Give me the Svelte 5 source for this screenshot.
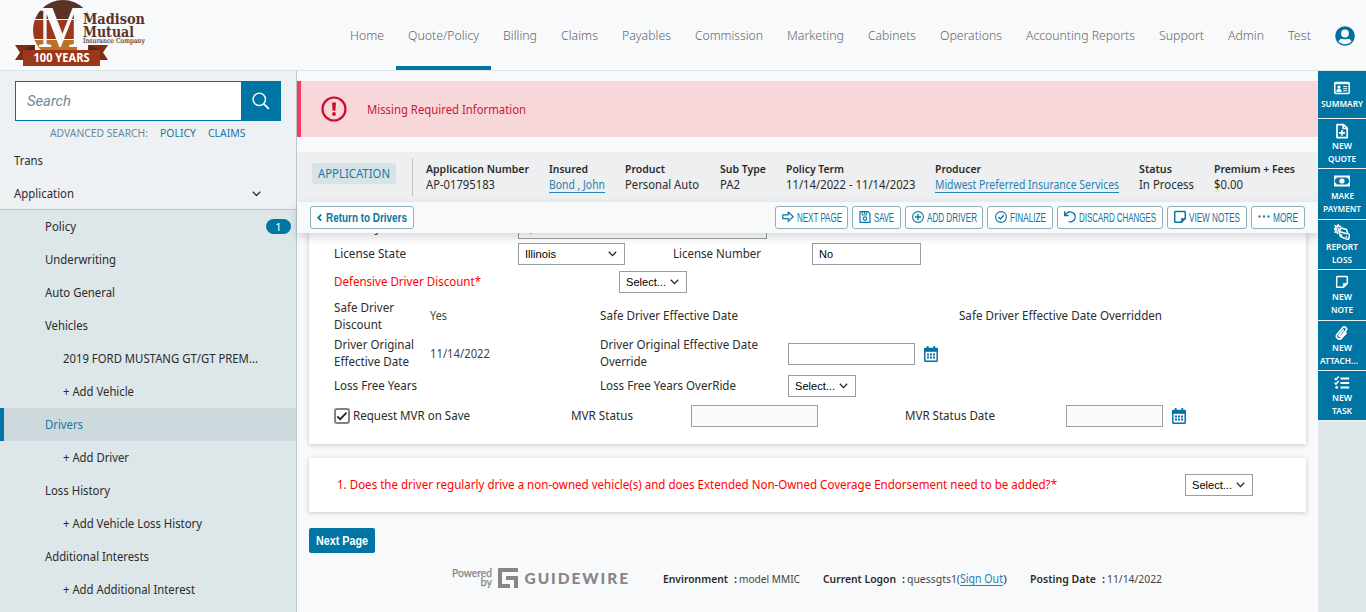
<script>
  const nav = [
    ['Home', 34], ['Quote/Policy', 71, true], ['Billing', 34], ['Claims', 37], ['Payables', 49],
    ['Commission', 68], ['Marketing', 57], ['Cabinets', 48], ['Operations', 62],
    ['Accounting Reports', 109], ['Support', 45], ['Admin', 36], ['Test', 23]
  ];
  const side = [
    ['Policy', 31, 1], ['Underwriting', 71, 1], ['Auto General', 70, 1], ['Vehicles', 43, 1],
    ['2019 FORD MUSTANG GT/GT PREM...', 195, 2], ['+ Add Vehicle', 71, 2], ['Drivers', 38, 1],
    ['+ Add Driver', 66, 2], ['Loss History', 65, 1], ['+ Add Vehicle Loss History', 139, 2],
    ['Additional Interests', 104, 1], ['+ Add Additional Interest', 132, 2]
  ];
  const info = [
    ['Application Number', 103, 'AP-01795183', 69], ['Insured', 39, 'Bond , John', 56, true],
    ['Product', 40, 'Personal Auto', 74], ['Sub Type', 46, 'PA2', 20],
    ['Policy Term', 58, '11/14/2022 - 11/14/2023', 129.5],
    ['Producer', 46, 'Midwest Preferred Insurance Services', 184, true],
    ['Status', 33, 'In Process', 55], ['Premium + Fees', 81, '$0.00', 29]
  ];
  const tools = [
    ['next', 'NEXT PAGE', 45, 73], ['save', 'SAVE', 20, 49], ['add', 'ADD DRIVER', 50, 78],
    ['check', 'FINALIZE', 36, 66], ['undo', 'DISCARD CHANGES', 77, 106],
    ['note', 'VIEW NOTES', 51, 80], ['dots', 'MORE', 25, 54]
  ];
  const rail = [
    ['card', [['SUMMARY', 42]], 48], ['file', [['NEW', 20], ['QUOTE', 28]], 50],
    ['cash', [['MAKE', 23], ['PAYMENT', 38]], 51], ['car', [['REPORT', 32], ['LOSS', 20]], 50],
    ['note', [['NEW', 20], ['NOTE', 22]], 51], ['clip', [['NEW', 20], ['ATTACH...', 38]], 50],
    ['tasks', [['NEW', 20], ['TASK', 20]], 50]
  ];
</script>

{#snippet T(s, w, cls = '')}
  <svg class="t {cls}" width={w} height="16"><text x="0" y="12" textLength={w} lengthAdjust="spacingAndGlyphs">{s}</text></svg>
{/snippet}

{#snippet select(s, w, tw)}
  <div class="field select" style="width:{w}px">
    {@render T(s, tw, 'ctl')}
    <svg width="9" height="6" viewBox="0 0 9 6"><path d="M.8.8 4.5 4.6 8.2.8" fill="none" stroke="#222" stroke-width="1.3" /></svg>
  </div>
{/snippet}

{#snippet calendar()}
  <svg class="cal" width="14" height="16" viewBox="0 0 14 16">
    <path d="M3.7 0v3M10.3 0v3" stroke="#0075a3" stroke-width="1.8" />
    <rect x=".8" y="2.4" width="12.4" height="12.8" rx=".4" fill="#fff" stroke="#0075a3" stroke-width="1.5" />
    <path d="M.1 4h13.800" stroke="#0075a3" stroke-width="3.6" />
    <path d="M3 8.5h8M3 11.500h8" stroke="#0075a3" stroke-width="1.8" stroke-dasharray="2 1" />
  </svg>
{/snippet}

{#snippet icon(n)}
  <svg class="ic" width="16" height="16" viewBox="0 0 16 16" fill="none" stroke="currentColor" stroke-width="1.4">
    {#if n === 'next'}
      <path d="M2.8 5.8h5.4V3l5 4.7-5 4.7V9.6H2.8z" stroke-width="1.2" stroke-linejoin="round" />
    {:else if n === 'save'}
      <path d="M3 2.7h8l2 2v8.6H3z" stroke-width="1.2" /><path d="M5.3 3v3h4.4V3M7.6 3v2" stroke-width="1" /><circle cx="8" cy="9.6" r="1.7" stroke-width="1.2" />
    {:else if n === 'add'}
      <circle cx="8" cy="8" r="5.4" stroke-width="1.1" /><path d="M8 5v6M5 8h6" />
    {:else if n === 'check'}
      <circle cx="8" cy="8" r="5.4" stroke-width="1.1" /><path d="m5.4 8 2 2 3.3-3.800" />
    {:else if n === 'undo'}
      <path d="M2.6 2.3v4.2h4.2M3 6.3C4.4 3.7 7 2.5 9.500 3.100c3 .8 4.500 3.800 3.500 6.500-.9 2.500-3.800 4-6.700 2.900" stroke-width="1.300" />
    {:else if n === 'note'}
      <path d="M2.700 3.300q0-.7.7-.7h9.200q.7 0 .7.7v6.200l-3.800 3.800H3.400q-.7 0-.7-.7z" stroke-width="1.500" /><path d="M9.300 13V9.400H13z" fill="currentColor" stroke-width=".6" />
    {:else if n === 'dots'}
      <path d="M2.500 7.500h2M7 7.500h2M11.500 7.500h2" stroke-width="1.900" />
    {:else if n === 'card'}
      <rect x=".8" y="2.500" width="14.400" height="11" rx="1" stroke-width="1.500" /><path d="M1 3.500h14" /><circle cx="5" cy="7.100" r="1.600" fill="currentColor" stroke="none" /><path d="M2.700 11.600q0-2.600 2.300-2.600t2.300 2.600zM9.200 6.600h4M9.200 8.700h4M9.200 10.800h4" fill="currentColor" stroke-width="1" />
    {:else if n === 'file'}
      <path d="M3 1.600h6.500l3.700 3.600v9.400H3z" stroke-width="1.700" stroke-linejoin="round" /><path d="M9.200 1.500v4h4M8 7v5.800M5 9.900h6" stroke-width="1.600" />
    {:else if n === 'cash'}
      <path fill="currentColor" stroke="none" fill-rule="evenodd" d="M-1 2.500h18v11H-1zM2.800 4.500q-.3 1.700-2 2v3q1.700.3 2 2h10.400q.3-1.700 2-2v-3q-1.700-.3-2-2z" /><circle cx="8" cy="8" r="2.600" fill="currentColor" stroke="none" />
    {:else if n === 'car'}
      <path d="m5 7.300 2.400-3.300 5.200 1.500 1 4 2.200 1.600-1.300 4.200-2.300-.4-5.700-2.400-.8-2.500z" stroke-width="1.500" stroke-linejoin="round" /><path d="m6 7.700 6.800 2M6.600 10.700l1.600.5M11.700 12.600l1.500.3" stroke-width="1.500" /><path d="M7.200 2.500 5.200 2.500 4.300.800 3.300 2.400 1.200 1.800l.6 2.100L0 5l1.800 1-.7 2.200 1.900-.3.700 2" stroke-width="1.400" fill="none" /><circle cx="3.800" cy="5" r="1.300" stroke-width="1.100" />
    {:else if n === 'clip'}
      <path d="m9.800 4.700-4.300 4.900c-1 1.300.6 2.700 1.700 1.500l4.700-5.300c2-2.500-1.200-5.200-3.400-2.800L3.300 9c-2.600 3.400 1.600 7 4.600 3.800l4.600-5.200" stroke-width="1.700" />
    {:else if n === 'tasks'}
      <path d="M6.500 3.600h8.700M6.500 8h8.700M6.500 12.500h8.700" stroke-width="2" /><path d="m.7 3.400 1.300 1.200 2.700-3M.7 7.900 2 9.100l2.700-3" stroke-width="1.500" /><circle cx="2.700" cy="12.500" r="1.400" fill="currentColor" stroke="none" />
    {/if}
  </svg>
{/snippet}

<div class="app">
  <header>
    <svg class="logo" width="135" height="70" viewBox="0 0 135 70">
      <defs><clipPath id="disc"><circle cx="48" cy="30" r="30" /></clipPath></defs>
      <g clip-path="url(#disc)">
        <rect x="10" y="-2" width="80" height="21" fill="#5b3325" />
        <rect x="10" y="20" width="52" height="19" fill="#9d371b" />
        <rect x="10" y="40" width="52" height="20" fill="#b97224" />
        <rect x="62" y="8.500" width="20" height="40" fill="#f7f9fb" />
      </g>
      <text x="23" y="47" textLength="50" lengthAdjust="spacingAndGlyphs" class="m">M</text>
      <path d="M0 45h20v15H0l5-7.500z M93 45H73v15h20l-5-7.500z" fill="#812a16" />
      <path d="M8 50 19 45.500V50zM85 50 74 45.500V50z" fill="#50251b" />
      <rect x="8" y="50" width="77" height="16" fill="#9d371b" />
      <text x="18.500" y="62" textLength="56" lengthAdjust="spacingAndGlyphs" class="yrs">100 YEARS</text>
      <text x="68" y="24" textLength="62" lengthAdjust="spacingAndGlyphs" class="mm">Madison</text>
      <text x="68" y="36.600" textLength="51" lengthAdjust="spacingAndGlyphs" class="mm">Mutual</text>
      <text x="68" y="43.300" textLength="62" lengthAdjust="spacingAndGlyphs" class="ins">Insurance Company</text>
    </svg>
    <nav>
      {#each nav as [s, w, on]}
        <a class:on style="width:{w + 24}px">{@render T(s, w, 'nav')}</a>
      {/each}
    </nav>
    <svg class="avatar" width="20" height="20" viewBox="0 0 20 20">
      <circle cx="10" cy="10" r="9.800" fill="#00709c" /><circle cx="10" cy="7.500" r="3.900" fill="#f7f9fb" />
      <path d="M3.500 15.500c.7-2.200 2.200-2.800 3.800-2.800q2.700 1 5.400 0c1.600 0 3.100.6 3.800 2.800-3.600 3.500-9.400 3.500-13 0z" fill="#f7f9fb" />
    </svg>
  </header>

  <div class="body">
    <aside>
      <div class="search">
        <div class="input">{@render T('Search', 44, 'ph')}</div>
        <div class="go"><svg width="18" height="18" viewBox="0 0 18 18" fill="none" stroke="#fff"><circle cx="7.300" cy="7.300" r="6.200" stroke-width="1.400" /><path d="m11.800 11.800 5 5" stroke-width="1.800" /></svg></div>
      </div>
      <div class="adv">
        {@render T('ADVANCED SEARCH:', 98, 's11 mute')}
        {@render T('POLICY', 36, 's11 link')}
        {@render T('CLAIMS', 37.5, 's11 link')}
      </div>
      <div class="item">{@render T('Trans', 29)}</div>
      <div class="item group">{@render T('Application', 60)}<svg width="9" height="6" viewBox="0 0 9 6"><path d="M.800.800 4.500 4.400 8.200.800" fill="none" stroke="#333" stroke-width="1.400" /></svg></div>
      <div class="tree">
        {#each side as [s, w, l]}
          <div class="item l{l}" class:sel={s === 'Drivers'}>
            {@render T(s, w, s === 'Drivers' ? 'link' : '')}
            {#if s === 'Policy'}<span class="badge">1</span>{/if}
          </div>
        {/each}
      </div>
    </aside>

    <main>
      <div class="alert">
        <svg width="26" height="26" viewBox="0 0 26 26"><circle cx="13" cy="13" r="11.500" fill="none" stroke="#cf0a2c" stroke-width="2.200" /><path d="M11 6.500h4l-.6 8.300h-2.800z" fill="#cf0a2c" /><circle cx="13" cy="18" r="1.900" fill="#cf0a2c" /></svg>
        {@render T('Missing Required Information', 159, 'err')}
      </div>
      <div class="info">
        <div class="tag">{@render T('APPLICATION', 72, 'link')}</div>
        <div class="rule"></div>
        <div class="cols">
          {#each info as [k, kw, v, vw, link]}
            <div>{@render T(k, kw, 'b')}<div class:ul={link} style="width:{vw}px">{@render T(v, vw, link ? 'lk' : '')}</div></div>
          {/each}
        </div>
      </div>
      <div class="bar">
        <button class="ret"><svg width="5" height="8" viewBox="0 0 5 8"><path d="M4.200.700 1.200 3.700l3 3" fill="none" stroke="#0075a3" stroke-width="1.700" /></svg>{@render T('Return to Drivers', 81, 'b blue big')}</button>
        <div class="tools">
          {#each tools as [i, s, w, bw]}
            <button style="width:{bw}px">{@render icon(i)}{@render T(s, w, 'blue tool')}</button>
          {/each}
        </div>
      </div>
      <div class="scroll">
        <section class="form">
          <div class="row r0">{@render T('Country', 47)}<div class="field" style="width:249px">{@render T(',', 3, 'blue comma')}</div></div>
          <div class="row r1">{@render T('License State', 72)}{@render select('Illinois', 107, 31)}{@render T('License Number', 88)}<div class="field" style="width:109px">{@render T('No', 14, 'ctl')}</div></div>
          <div class="row r2">{@render T('Defensive Driver Discount*', 147, 'red')}{@render select('Select...', 68, 40)}</div>
          <div class="row r3"><div>{@render T('Safe Driver', 60)}{@render T('Discount', 48)}</div>{@render T('Yes', 17, 'val')}{@render T('Safe Driver Effective Date', 138)}{@render T('Safe Driver Effective Date Overridden', 203)}</div>
          <div class="row r4"><div>{@render T('Driver Original', 80)}{@render T('Effective Date', 75)}</div>{@render T('11/14/2022', 60, 'val')}<div>{@render T('Driver Original Effective Date', 158)}{@render T('Override', 47)}</div><div class="field" style="width:127px"></div>{@render calendar()}</div>
          <div class="row r5">{@render T('Loss Free Years', 83)}{@render T('Loss Free Years OverRide', 136)}{@render select('Select...', 68, 40)}</div>
          <div class="row r6">
            <div class="chk"><svg width="16" height="16" viewBox="0 0 16 16"><rect x="1" y="1" width="14" height="14" rx="2" fill="#fff" stroke="#7b8586" stroke-width="2" /><path d="m3.300 8.300 2.900 2.900 6.300-6.600" fill="none" stroke="#222" stroke-width="1.700" /></svg>{@render T('Request MVR on Save', 117)}</div>
            {@render T('MVR Status', 62)}<div class="field off" style="width:127px"></div>{@render T('MVR Status Date', 90)}<div class="field off" style="width:97px"></div>{@render calendar()}
          </div>
        </section>
        <section class="question">
          {@render T('1. Does the driver regularly drive a non-owned vehicle(s) and does Extended Non-Owned Coverage Endorsement need to be added?*', 720, 'red')}
          {@render select('Select...', 68, 40)}
        </section>
        <button class="primary">{@render T('Next Page', 52, 'white')}</button>
        <footer>
          <svg class="gw" width="178" height="24" viewBox="0 0 178 24" fill="#868686">
            <text x="0" y="10.500" textLength="40" lengthAdjust="spacingAndGlyphs" class="pw">Powered</text><text x="28.500" y="20" textLength="11.500" lengthAdjust="spacingAndGlyphs" class="pw">by</text>
            <path d="M46 2h20v4H50v12h8v-4h-4v-4h12v12h-4v-8h-4v8H46z" />
            <text x="72.500" y="18" textLength="105.500" lengthAdjust="spacingAndGlyphs" class="gwt">GUIDEWIRE</text>
          </svg>
          <div class="f">{@render T('Environment', 65, 's11 b')}{@render T(':', 3, 's11 b')}{@render T('model MMIC', 61, 's11 val')}</div>
          <div class="f">{@render T('Current Logon', 73, 's11 b')}{@render T(':', 3, 's11 b')}<div class="sign">{@render T('quessgts1(', 53, 's11 val')}<div class="ul">{@render T('Sign Out', 43, 's11 lk')}</div>{@render T(')', 4, 's11 val')}</div></div>
          <div class="f">{@render T('Posting Date', 66, 's11 b')}{@render T(':', 3, 's11 b')}{@render T('11/14/2022', 55, 's11 val')}</div>
        </footer>
      </div>
    </main>

    <div class="rail">
      {#each rail as [i, lines, h]}
        <div class="ri {i}" class:one={lines.length === 1} style="height:{h}px">
          {@render icon(i)}
          {#each lines as [s, w]}{@render T(s, w, 'rt')}{/each}
        </div>
      {/each}
    </div>
  </div>
</div>

<style>
  :global(body) { background: #f7f9fb; overflow: hidden; }
  .app { width: 1366px; height: 612px; display: flex; flex-direction: column; overflow: hidden; font-family: "Noto Sans", sans-serif; background: #f7f9fb; }
  svg { display: block; flex: none; }
  .t { overflow: visible; fill: #2b2b2b; font-size: 12.300px; }
  .t.nav { fill: #686868; font-size: 13px; font-weight: 300; height: 18px; }
  .t.s11 { font-size: 11.500px; }
  .t.mute { fill: #6b8a99; }
  .t.link { fill: #1c77a2; }
  .t.lk { fill: #2a82b2; font-size: 12px; }
  .t.blue { fill: #0b74a1; }
  .t.red { fill: #f00; }
  .t.err { fill: #c9183c; }
  .t.val { fill: #444; }
  .t.b { font-weight: 600; font-size: 11.500px; }
  .t.big { font-size: 12.500px; }
  .t.tool { font-size: 12.300px; }
  .t.ctl { font-family: "Liberation Sans", sans-serif; font-size: 11.500px; fill: #000; }
  .t.ph { font-family: Roboto, sans-serif; font-style: italic; font-size: 14.500px; fill: #6b8a99; padding-top: 2px; }
  .t.white { fill: #fff; font-weight: 700; font-size: 12px; }
  .t.rt { fill: #fff; font-weight: 600; font-size: 9.700px; height: 13px; }
  header { height: 70px; flex: none; display: flex; border-bottom: 1px solid #dbe5e8; padding-left: 15px; }
  .logo { overflow: hidden; }
  .m { font: bold 59px "Liberation Serif", serif; fill: #f7f9fb; }
  .yrs { font: bold 11.500px "Noto Sans", sans-serif; fill: #fff; }
  .mm { font: bold 15px "DejaVu Serif", serif; fill: #5b3325; }
  .ins { font: 6.800px "DejaVu Serif", serif; fill: #5b3325; stroke: #5b3325; stroke-width: .15; }
  nav { display: flex; margin-left: 188px; }
  nav a { display: flex; justify-content: center; height: 70px; box-sizing: border-box; padding-top: 28px; }
  nav a.on { border-bottom: 4px solid #0075a3; }
  .avatar { margin: 26px 0 0 12px; }
  .body { flex: 1; display: flex; min-height: 0; }
  aside { width: 296px; flex: none; border-right: 1px solid #b5c9ce; background: #edf1f4; overflow: hidden; }
  .search { display: flex; margin: 10px 15px 0; height: 40px; }
  .input { flex: 1; border: 1px solid #0075a3; border-right: 0; background: #fff; display: flex; align-items: center; padding-left: 11px; }
  .go { width: 40px; background: #0075a3; display: flex; align-items: center; justify-content: center; }
  .adv { display: flex; gap: 12px; padding: 4px 0 0 50px; height: 19px; }
  .item { height: 33px; display: flex; align-items: center; box-sizing: border-box; padding-left: 14px; }
  .group { justify-content: space-between; padding-right: 35px; padding-top: 1px; border-bottom: 1px solid #b5c9ce; }
  .tree { background: #dde6e9; padding-bottom: 20px; }
  .l1 { padding-left: 45px; }
  .l2 { padding-left: 63px; }
  .sel { background: #cdd9dd; border-left: 4px solid #0075a3; padding-left: 41px; }
  .badge { margin-left: auto; margin-right: 5px; width: 25px; height: 15px; border-radius: 8px; background: #0075a3; color: #fff; font-size: 11px; line-height: 15px; text-align: center; }
  main { width: 1021px; flex: none; display: flex; flex-direction: column; }
  .alert { margin-top: 10px; height: 56px; background: #f8d7da; border-left: 4px solid #f93b5f; display: flex; align-items: center; gap: 20px; padding-left: 20px; flex: none; }
  .alert .t { height: 15px; }
  .info { margin-top: 15px; height: 50px; background: #eeeff1; display: flex; align-items: center; flex: none; }
  .tag { width: 84px; height: 21px; margin: -7px 0 0 15px; border-radius: 3px; background: #d6e4e7; display: flex; align-items: center; justify-content: center; }
  .rule { width: 1px; height: 38px; background: #c0c4c6; margin: 0 13px 0 16px; }
  .cols { display: grid; grid-template-columns: 123px 76px 94.500px 66px 149.500px 203.500px 75px 90px; margin-top: -1px; }
  .ul { height: 15px; border-bottom: 1px solid #2a82b2; }
  .bar { height: 31px; flex: none; display: flex; justify-content: space-between; align-items: flex-start; padding: 4px 13px 0; position: relative; z-index: 1; background: #f7f9fb; box-shadow: 0 4px 9px rgba(0, 0, 0, .16); box-sizing: border-box; }
  button { height: 23px; display: flex; align-items: center; justify-content: center; box-sizing: border-box; padding: 0; border: 1px solid #8fafbb; border-radius: 3px; background: #fff; color: #0b74a1; }
  button .t { height: 15px; }
  .ret { width: 104px; gap: 4px; }
  .tools { display: flex; gap: 4px; }
  .tools button { padding-right: 1px; }
  .tools .ic { margin: -1px 1px 0 -1px; }
  .scroll { flex: 1; overflow: hidden; padding: 0 12px; }
  section { background: #fff; box-shadow: 0 1px 5px rgba(0, 0, 0, .2); box-sizing: border-box; width: 997px; }
  .form { margin-top: -17px; height: 228px; padding-left: 25px; }
  .row { display: grid; align-items: center; height: 28px; }
  .r0 { height: 24px; grid-template-columns: 184px 1fr; }
  .r1 { grid-template-columns: 184px 154.500px 139.500px 1fr; }
  .r2 { grid-template-columns: 285px 1fr; }
  .r3 { height: 41px; grid-template-columns: 96px 169.500px 359px 1fr; }
  .r3 > .t { margin-top: -1px; }
  .r4 { height: 34px; grid-template-columns: 96px 169.500px 188.500px 136px 1fr; }
  .r5 { height: 30px; grid-template-columns: 265.500px 188.500px 1fr; }
  .r6 { height: 30px; grid-template-columns: 237px 120px 213.500px 161.500px 106px 1fr; }
  .row > div > .t { height: 17px; }
  .row > .field > .t { height: 16px; }
  .r6 .chk .t { height: 16px; }
  .field { height: 22px; border: 1px solid #979f9f; box-sizing: border-box; background: #fff; display: flex; align-items: center; padding: 0 6px; }
  .off { background: #fafafa; }
  .select { justify-content: space-between; padding-right: 7px; }
  .chk { display: flex; align-items: center; gap: 3px; }
  .comma { margin-left: 5px; }
  .question { margin-top: 14px; height: 54px; display: flex; align-items: center; justify-content: space-between; padding: 0 53px 0 28px; }
  .primary { margin-top: 16px; width: 66px; height: 25px; background: #0075a3; border: 0; border-radius: 2px; }
  footer { display: flex; align-items: center; margin: 13px 0 0 143px; }
  footer .t { margin-top: 1px; height: 15px; }
  .gw { margin-right: 32.500px; overflow: visible; }
  .pw { font: 11px Lato, sans-serif; stroke: #868686; stroke-width: .25; }
  .gwt { font: 900 14.500px Lato, sans-serif; letter-spacing: 1.800px; }
  .f { display: flex; gap: 6px; margin-right: 23px; }
  .f > :global(:last-child) { margin-left: -4px; }
  .sign { display: flex; }
  .rail { width: 48px; background: #dde6e9; flex: none; }
  .ri { box-sizing: border-box; background: #0075a3; border-bottom: 1px solid #e8eff2; color: #fff; display: flex; flex-direction: column; align-items: center; padding-top: 4px; }
  .ri .ic { margin-bottom: -2px; }
  .ri.one { padding-top: 9px; }
  .ri.one .ic { margin-bottom: -1px; }
  .clip .t:last-child { margin-right: 6px; }
</style>
